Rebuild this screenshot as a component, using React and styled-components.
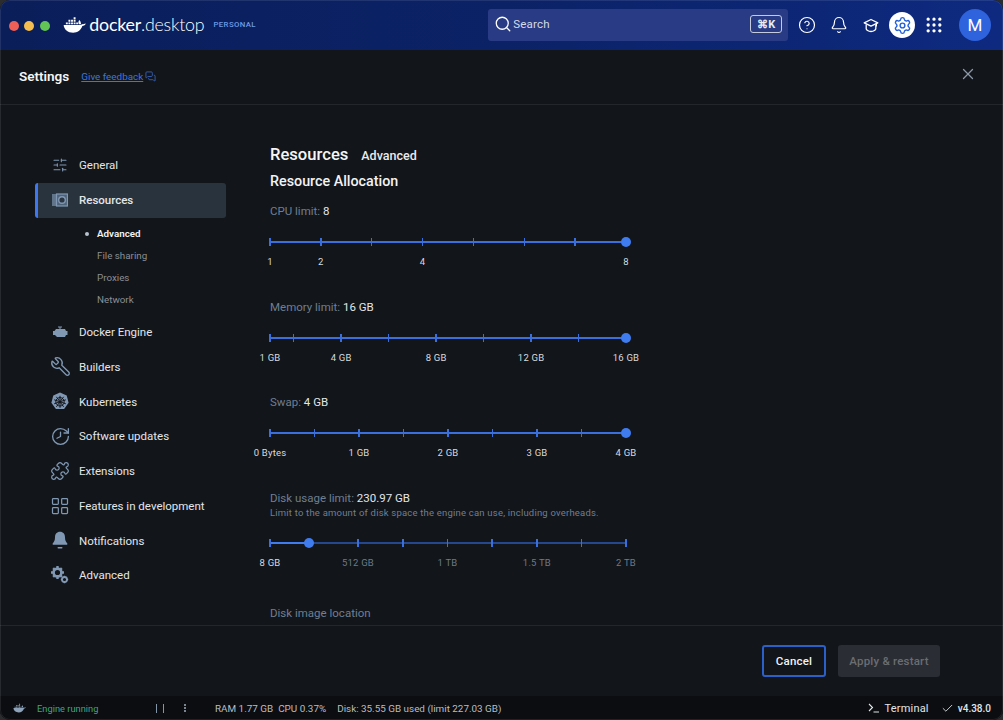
import React from "react";
import styled, { createGlobalStyle } from "styled-components";
import {
  Search, CircleHelp, Bell, Settings as Gear, Grip, X, Wrench, Puzzle,
  LayoutGrid, Check, History, SlidersHorizontal, MessagesSquare,
} from "lucide-react";

const Global = createGlobalStyle`
  html, body { margin: 0; padding: 0; background: #2b2c2e; }
  body { font-family: Roboto, "Liberation Sans", sans-serif; overflow: hidden; }
  * { box-sizing: border-box; }
`;

const Win = styled.div`
  width: 1003px; height: 720px; display: flex; flex-direction: column;
  background: #12151a; border-radius: 10px; overflow: hidden; color: #e6e9ec;
  position: relative;
  &::after {
    content: ""; position: absolute; inset: 0; border: 1px solid rgba(255, 255, 255, .09);
    border-radius: 10px; pointer-events: none;
  }
`;
const TopBar = styled.header`
  height: 50px; flex: none; display: flex; align-items: center; padding: 0 12px 0 8.7px;
  background: linear-gradient(90deg, #0a1e5a 0%, #0b2266 50%, #0e2a80 100%);
`;
const Lights = styled.div`display: flex; gap: 5.7px; margin-right: 13.2px; padding-top: 1px;`;
const Light = styled.span`width: 10px; height: 10px; border-radius: 50%; background: ${p => p.$c};`;
const Brand = styled.div`display: flex; align-items: center; width: 191px; flex: none;`;
const Wordmark = styled.span`
  font-family: Lato, "Open Sans", sans-serif; font-size: 17.8px; color: #fff; letter-spacing: -0.2px;
  margin-left: 3px; font-weight: 400; line-height: 1;
  i { font-style: normal; font-weight: 300; }
`;
const Tier = styled.span`font-size: 7.8px; font-weight: 500; letter-spacing: .4px; color: #6f9be8; margin-left: 9px;`;
const SearchBox = styled.div`
  margin-left: 234px; width: 300px; height: 32px; flex: none; border-radius: 3px; background: #283b84;
  display: flex; align-items: center; padding: 0 6px 2px 6px; gap: 1px; color: #d5dbe9; font-size: 11.5px; letter-spacing: .2px;
`;
const Kbd = styled.span`
  margin-left: auto; width: 32px; height: 18px; border: 1px solid #c4cbdc; border-radius: 3px;
  font-size: 11px; font-weight: 700; display: flex; align-items: center; justify-content: center; color: #e8ebf2;
`;
const Tools = styled.div`display: flex; align-items: center; margin-left: 3.15px;`;
const ToolBtn = styled.div`
  width: 26px; height: 26px; margin: 0 2.85px; display: flex; align-items: center; justify-content: center; border-radius: 50%;
  color: ${p => (p.$on ? "#2560d8" : "#fff")}; background: ${p => (p.$on ? "#fff" : "transparent")};
`;
const Avatar = styled.div`
  width: 32px; height: 32px; border-radius: 50%; background: #2f62dd; color: #fff; font-size: 17px;
  display: flex; align-items: center; justify-content: center; margin-left: 9px; flex: none;
`;
const TitleRow = styled.div`
  height: 55px; flex: none; display: flex; align-items: center; padding: 0 26px 2px 19px;
  border-bottom: 1px solid #23272c;
`;
const PageTitle = styled.h1`margin: 0; font-size: 13.5px; font-weight: 600; color: #f4f5f6;`;
const Feedback = styled.a`
  margin-left: 12px; font-size: 9.9px; color: #3f75da; text-decoration: underline; display: flex; align-items: center; gap: 2px;
  margin-top: 1px;
`;
const Close = styled.div`margin-left: auto; color: #8b98a8; display: flex; margin-top: -4px;`;
const Body = styled.div`flex: 1; min-height: 0; display: flex; overflow: hidden;`;
const Side = styled.nav`width: 240px; flex: none; padding: 43px 0 0 35px;`;
const Item = styled.div`
  width: 191px; height: ${p => (p.$active ? "35px" : "34.75px")}; display: flex; align-items: center;
  padding-left: ${p => (p.$active ? "12px" : "15px")}; gap: 9px; font-size: 11.5px;
  font-weight: ${p => (p.$active ? 500 : 400)}; color: #e3e6e9;
  background: ${p => (p.$active ? "#29333e" : "transparent")}; border-radius: 3px;
  border-left: ${p => (p.$active ? "3px solid #3f78ee" : "0")};
`;
const IconSlot = styled.span`width: 20px; height: 20px; flex: none; display: flex; align-items: center; justify-content: center; color: #8098b4;`;
const SubList = styled.div`display: flex; flex-direction: column; padding: 5px 0 4px 62px;`;
const SubItem = styled.div`
  height: 22px; display: flex; align-items: center; font-size: 9.8px; position: relative;
  color: ${p => (p.$active ? "#f1f3f4" : "#8a8f95")}; font-weight: ${p => (p.$active ? 600 : 400)};
  &::before {
    content: ""; display: ${p => (p.$active ? "block" : "none")}; position: absolute; left: -12px; top: 9px;
    width: 4px; height: 4px; border-radius: 50%; background: #b8c2cf;
  }
`;
const Main = styled.main`flex: 1; padding: 39px 0 0 30px;`;
const Heads = styled.div`display: flex; align-items: baseline; gap: 13px; height: 22px;`;
const H1 = styled.h2`margin: 0; font-size: 16.6px; font-weight: 500; color: #f4f5f6; line-height: 22px;`;
const H1Sub = styled.span`font-size: 12.5px; font-weight: 500; color: #e9ebed;`;
const H2 = styled.h3`margin: 4px 0 0; font-size: 14.3px; font-weight: 500; color: #f1f3f4; line-height: 22px;`;
const Field = styled.section`height: ${p => p.$h}px; padding-top: ${p => p.$top}px;`;
const FieldLabel = styled.div`font-size: 11.5px; line-height: 15px; color: #6f7f91; b { font-weight: 400; color: #e3e6e9; }`;
const FieldHint = styled.div`font-size: 9.5px; line-height: 15px; margin-top: -1px; color: #707f90; letter-spacing: .2px;`;
const Slider = styled.div`width: 356px; position: relative; height: 9px; margin-top: ${p => p.$mt}px;`;
const Rail = styled.div`position: absolute; left: 0; right: 0; top: 3.5px; height: 2px; background: ${p => (p.$dim ? "#24478f" : "#3a70de")};`;
const Fill = styled.div`position: absolute; left: 0; top: 3.5px; height: 2px; background: #3f7cf0;`;
const Tick = styled.span`position: absolute; top: .5px; width: 1.5px; height: 8px; margin-left: -.75px; background: #3a70de;`;
const Thumb = styled.span`position: absolute; top: -.5px; width: 10px; height: 10px; margin-left: -5px; border-radius: 50%; background: #3f7cf0;`;
const MarkRow = styled.div`position: relative; height: 14px; width: 356px; margin-top: 9.5px;`;
const Mark = styled.span`
  position: absolute; top: 0; transform: translateX(-50%); font-size: 9.5px; line-height: 12px; white-space: nowrap; letter-spacing: .2px;
  color: ${p => (p.$dim ? "#6d7a88" : "#d8dbde")};
`;
const Footer = styled.footer`
  height: 71px; flex: none; border-top: 1px solid #23272c; display: flex; align-items: center; justify-content: flex-end;
  gap: 12px; padding: 0 63px 0 0;
`;
const Ghost = styled.button`
  width: 64px; height: 32px; background: transparent; border: 2px solid #2b5fc9; border-radius: 3px; color: #f1f3f4;
  font: 500 11.5px Roboto, sans-serif; letter-spacing: .2px;
`;
const Primary = styled.button`
  width: 102px; height: 32px; background: #2a2d33; border: 0; border-radius: 3px; color: #6a6d72;
  font: 500 11.5px Roboto, sans-serif; letter-spacing: .2px;
`;
const Status = styled.div`
  height: 24px; flex: none; background: #0b0d11; display: flex; align-items: center; padding: 0 12px 0 13px; font-size: 9.9px; color: #b9bec4;
`;
const Running = styled.span`color: #3fa582; margin-left: 11px; width: 119px; font-size: 9.3px;`;
const Pause = styled.span`width: 8px; height: 9px; border-left: 1px solid #8595a8; border-right: 1px solid #8595a8; margin-right: 20px;`;
const Dots = styled.span`width: 2px; height: 2px; border-radius: 50%; background: #a3aeba; box-shadow: 0 -3px #a3aeba, 0 3px #a3aeba; margin-right: 29px;`;
const Stat = styled.span`margin-right: ${p => p.$mr}px;`;
const Right = styled.div`margin-left: auto; display: flex; align-items: center; color: #e2e5e8;`;
const Term = styled.span`display: flex; align-items: center; gap: 5px; font-size: 11px; letter-spacing: .2px; margin-right: 12px;`;
const Version = styled.span`display: flex; align-items: center; gap: 4px; font-weight: 500; font-size: 10px;`;

const Whale = ({ w, color = "#fff" }) => (
  <svg width={w} viewBox="0 0 24 18" fill={color} style={{ flex: "none" }}>
    <path d="M.7 9.3h17.1c1 0 1.7-.3 2.2-.9.5.5 1.8.3 3.3-.6.4.2.4.4.3.6-1 1.5-2.3 1.9-3.4 2-1.5 4.4-5.100 7-9.600 7C5 17.400 1 14 .7 9.300z"/>
    <path d="M3 6.700h2v2H3zM5.700 6.700h2v2h-2zM8.400 6.700h2v2h-2zM11.100 6.700h2v2h-2zM13.800 6.700h2v2h-2zM5.700 4h2v2h-2zM8.400 4h2v2h-2zM11.100 4h2v2h-2zM11.100 1.300h2v2h-2z"/>
    <path d="M16.500 8.500c-.6-1.500-.5-3 .4-4.200 1.200.8 1.700 2 1.700 3.300.3.400.3.600 0 .9z"/>
  </svg>
);
const CapIcon = () => (
  <svg width="16" height="15" viewBox="0 0 16 15" fill="none" stroke="#fff" strokeWidth="1.300" strokeLinejoin="round">
    <path d="M8 1.500l6.800 3.300L8 8.100 1.200 4.800z"/>
    <path d="M3.200 6.400v4.300c0 1 2.100 2.800 4.800 2.800s4.800-1.800 4.800-2.800V6.400"/>
    <path d="M13.500 5.500v3" strokeWidth="1"/>
  </svg>
);
const ResourcesIcon = () => (
  <svg width="16" height="14" viewBox="0 0 16 14" fill="none" stroke="#8098b4">
    <rect x="4.500" y="1" width="11" height="12" strokeWidth="1.200" fill="#4f6378"/>
    <circle cx="10" cy="7" r="3.300" strokeWidth="1.400" fill="#2b3642"/>
    <path d="M1 1v12M3 1v12" strokeWidth="1.300"/>
  </svg>
);
const EngineIcon = () => (
  <svg width="16" height="14" viewBox="0 0 16 14" fill="#8098b4">
    <path d="M4 4h9l1 2h1.500v4H14l-1 2H5L3 10H1V6h1.500z"/><path d="M6 1.500h4v1H8.500V4h-1V2.500H6z"/>
  </svg>
);
const KubeIcon = () => (
  <svg width="20" height="20" viewBox="0 0 20 20">
    <path d="M10 .5l6.700 3.100 1.900 7.200-4.500 6.200H5.900L1.400 10.800l1.900-7.200z" fill="#8098b4"/>
    <g stroke="#12151a" strokeWidth="1" fill="none">
      <circle cx="10" cy="9.800" r="4.200"/>
      <path d="M10 3.800v12M4.200 7.800l11.600 4M15.800 7.800l-11.600 4M6.400 4.800l7.200 10M13.600 4.800l-7.200 10"/>
    </g>
  </svg>
);
const BellFill = () => (
  <svg width="16" height="19" viewBox="0 0 16 19" fill="#8098b4">
    <path d="M8 .8c3.200 0 5 2.400 5 5.400 0 3.300 1 4.600 2.300 6.300.4.600 0 1.300-.7 1.300H1.400c-.7 0-1.100-.7-.7-1.300C2 10.800 3 9.500 3 6.200 3 3.200 4.800.8 8 .8z"/><rect x="5.500" y="16" width="5" height="1.400" rx=".7"/>
  </svg>
);
const Gears = () => (
  <svg width="18" height="18" viewBox="0 0 18 18" fill="#8098b4">
    <circle cx="6.500" cy="6.500" r="3.900" fill="none" stroke="#8098b4" strokeWidth="2.600"/>
    <path d="M5.300 0h2.400v2.500H5.300zM5.300 10.500h2.400V13H5.300zM0 5.300h2.500v2.400H0zM10.500 5.300H13v2.400h-2.500zM1.300 3l1.700-1.700 1.500 1.500L2.800 4.500zM8.500 10.200l1.700-1.700 1.500 1.500-1.700 1.700zM10 1.300L11.700 3l-1.500 1.500-1.700-1.700zM2.800 8.500l1.700 1.700L3 11.700 1.300 10z"/>
    <circle cx="13.500" cy="13.500" r="2.500" fill="none" stroke="#8098b4" strokeWidth="1.800"/>
    <path d="M12.800 9.800h1.400v1.400h-1.400zM12.800 15.800h1.400v1.400h-1.400zM9.800 12.800h1.400v1.400H9.800zM15.800 12.800h1.400v1.400h-1.400z"/>
  </svg>
);

const sliders = [
  { label: "CPU limit:", val: "8", h: 100, top: 12, ticks: [0, 1, 2, 3, 4, 5, 6, 7].map(i => i / 7), marks: [["1", 0], ["2", 1 / 7], ["4", 3 / 7], ["8", 1]] },
  { label: "Memory limit:", val: "16 GB", h: 95, top: 8, ticks: [0, 1, 3, 5, 7, 9, 11, 13, 15].map(i => i / 15), marks: [["1 GB", 0], ["4 GB", .2], ["8 GB", 7 / 15], ["12 GB", 11 / 15], ["16 GB", 1]] },
  { label: "Swap:", val: "4 GB", h: 96, top: 8, ticks: [0, 1, 2, 3, 4, 5, 6, 7, 8].map(i => i / 8), marks: [["0 Bytes", 0], ["1 GB", .25], ["2 GB", .5], ["3 GB", .75], ["4 GB", 1]] },
];
const diskTicks = [0, .2471, .3729, .4985, .6242, .7498, .8751, 1];
const pct = f => `${f * 100}%`;

function Track({ ticks, thumb, dim, mt }) {
  return (
    <Slider $mt={mt}>
      <Rail $dim={dim} />
      {dim && <Fill style={{ width: pct(thumb) }} />}
      {ticks.map(t => <Tick key={t} style={{ left: pct(t) }} />)}
      <Thumb style={{ left: pct(thumb) }} />
    </Slider>
  );
}
function Marks({ marks, dimFrom }) {
  return (
    <MarkRow>
      {marks.map(([t, f], i) => <Mark key={t} $dim={dimFrom !== undefined && i >= dimFrom} style={{ left: pct(f) }}>{t}</Mark>)}
    </MarkRow>
  );
}

const nav = [
  ["Docker Engine", <EngineIcon />],
  ["Builders", <Wrench size={21} strokeWidth={1.5} style={{ transform: "scaleX(-1)", flex: "none" }} />],
  ["Kubernetes", <KubeIcon />],
  ["Software updates", <History size={21} strokeWidth={1.5} style={{ transform: "scaleX(-1)", flex: "none" }} />],
  ["Extensions", <Puzzle size={20} strokeWidth={1.5} />],
  ["Features in development", <LayoutGrid size={20} strokeWidth={1.5} />],
  ["Notifications", <BellFill />],
  ["Advanced", <Gears />],
];

export default function App() {
  return (
    <>
      <Global />
      <Win>
        <TopBar>
          <Lights>
            <Light $c="#ee5f58" /><Light $c="#f5bd4f" /><Light $c="#61c454" />
          </Lights>
          <Brand>
            <Whale w={23} />
            <Wordmark>docker<i>.desktop</i></Wordmark>
            <Tier>PERSONAL</Tier>
          </Brand>
          <SearchBox>
            <Search size={18} strokeWidth={1.7} color="#fff" />
            Search
            <Kbd>⌘K</Kbd>
          </SearchBox>
          <Tools>
            <ToolBtn><CircleHelp size={18} strokeWidth={1.6} /></ToolBtn>
            <ToolBtn><Bell size={18} strokeWidth={1.6} /></ToolBtn>
            <ToolBtn><CapIcon /></ToolBtn>
            <ToolBtn $on><Gear size={19} strokeWidth={1.8} /></ToolBtn>
            <ToolBtn><Grip size={20} strokeWidth={2} /></ToolBtn>
          </Tools>
          <Avatar>M</Avatar>
        </TopBar>
        <TitleRow>
          <PageTitle>Settings</PageTitle>
          <Feedback>Give feedback <MessagesSquare size={11} strokeWidth={1.6} /></Feedback>
          <Close><X size={18} strokeWidth={1.7} /></Close>
        </TitleRow>
        <Body>
          <Side>
            <Item><IconSlot><SlidersHorizontal size={16} strokeWidth={1.6} /></IconSlot>General</Item>
            <Item $active><IconSlot><ResourcesIcon /></IconSlot>Resources</Item>
            <SubList>
              <SubItem $active>Advanced</SubItem>
              <SubItem>File sharing</SubItem>
              <SubItem>Proxies</SubItem>
              <SubItem>Network</SubItem>
            </SubList>
            {nav.map(([t, ic]) => <Item key={t}><IconSlot>{ic}</IconSlot>{t}</Item>)}
          </Side>
          <Main>
            <Heads><H1>Resources</H1><H1Sub>Advanced</H1Sub></Heads>
            <H2>Resource Allocation</H2>
            {sliders.map(s => (
              <Field key={s.label} $h={s.h} $top={s.top}>
                <FieldLabel>{s.label} <b>{s.val}</b></FieldLabel>
                <Track ticks={s.ticks} thumb={1} mt={18.5} />
                <Marks marks={s.marks} />
              </Field>
            ))}
            <Field $h={123} $top={8}>
              <FieldLabel>Disk usage limit: <b>230.97 GB</b></FieldLabel>
              <FieldHint>Limit to the amount of disk space the engine can use, including overheads.</FieldHint>
              <Track ticks={diskTicks} thumb={.11} dim mt={18} />
              <Marks marks={[["8 GB", 0], ["512 GB", .2471], ["1 TB", .4985], ["1.5 TB", .7498], ["2 TB", 1]]} dimFrom={1} />
            </Field>
            <FieldLabel>Disk image location</FieldLabel>
          </Main>
        </Body>
        <Footer>
          <Ghost>Cancel</Ghost>
          <Primary>Apply &amp; restart</Primary>
        </Footer>
        <Status>
          <Whale w={13} color="#8ea3ba" />
          <Running>Engine running</Running>
          <Pause />
          <Dots />
          <Stat $mr={5}>RAM 1.77 GB</Stat>
          <Stat $mr={11}>CPU 0.37%</Stat>
          <Stat $mr={0}>Disk: 35.55 GB used (limit 227.03 GB)</Stat>
          <Right>
            <Term>
              <svg width="11" height="10" viewBox="0 0 11 10" fill="none" stroke="#e2e5e8" strokeWidth="1.100"><path d="M1 1l3.500 3.500L1 8M5.500 9H11" /></svg>
              Terminal
            </Term>
            <Version><Check size={13} strokeWidth={1.6} />v4.38.0</Version>
          </Right>
        </Status>
      </Win>
    </>
  );
}
